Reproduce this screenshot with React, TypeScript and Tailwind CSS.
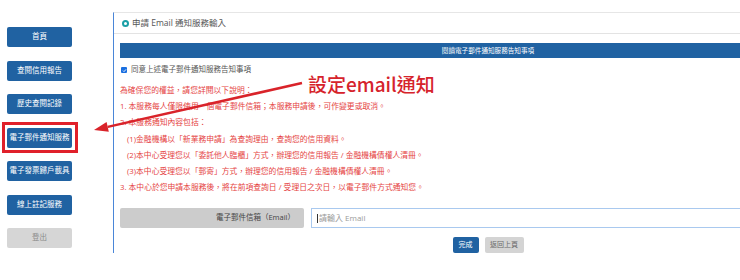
import React from "react";

const MENU = [
  "首頁",
  "查閱信用報告",
  "歷史查閱記錄",
  "電子郵件通知服務",
  "電子發票歸戶載具",
  "線上註記服務",
];

const NOTES: { text: string; indent?: boolean }[] = [
  { text: "為確保您的權益，請您詳閱以下說明：" },
  { text: "1. 本服務每人僅限使用一個電子郵件信箱；本服務申請後，可作變更或取消。" },
  { text: "2. 本服務通知內容包括：" },
  { text: "(1)金融機構以「新業務申請」為查詢理由，查詢您的信用資料。", indent: true },
  { text: "(2)本中心受理您以「委託他人臨櫃」方式，辦理您的信用報告 / 金融機構債權人清冊。", indent: true },
  { text: "(3)本中心受理您以「郵寄」方式，辦理您的信用報告 / 金融機構債權人清冊。", indent: true },
  { text: "3. 本中心於您申請本服務後，將在前項查詢日 / 受理日之次日，以電子郵件方式通知您。" },
];

function Sidebar() {
  return (
    <aside className="flex w-[113px] shrink-0 flex-col gap-[13.5px] pl-[7px] pt-[27px]">
      {MENU.map((label) => (
        <div
          key={label}
          className="flex h-[20px] w-[65px] items-center justify-center rounded-[2px] bg-[#2062a2] text-[7.5px] text-white"
        >
          {label}
        </div>
      ))}
      <div className="flex h-[20px] w-[65px] items-center justify-center rounded-[2px] bg-[#d6d6d6] text-[7.5px] text-[#8a8a8a]">
        登出
      </div>
    </aside>
  );
}

function MainPanel() {
  return (
    <main className="mt-[12px] w-[743px] shrink-0 border-l border-t border-l-[#4a86d8] border-t-[#e6e6e6]">
      <div className="flex h-[21px] items-center gap-[3px] border-b border-[#e3e3e3] pl-[8px] text-[8.5px] text-[#555]">
        <span className="size-[7px] rounded-full border-[2px] border-[#1a9fa6]" />
        <span>申請 Email 通知服務輸入</span>
      </div>

      <div className="pl-[6px]">
        <div className="mt-[9px] flex h-[15px] w-[736px] items-center justify-center bg-[#2062a2] text-[6.6px] text-white">
          閱讀電子郵件通知服務告知事項
        </div>

        <div className="mt-[6px] flex h-[12px] items-center gap-[4px] pl-[1px] text-[7.5px] text-[#555]">
          <span className="flex size-[6px] items-center justify-center rounded-[1px] bg-[#1a6fe0]">
            <svg viewBox="0 0 10 10" className="size-[5px]">
              <path d="M2 5.2l2 2 4-4.4" fill="none" stroke="white" strokeWidth="1.8" />
            </svg>
          </span>
          <span>同意上述電子郵件通知服務告知事項</span>
        </div>

        <div className="mt-[6px] text-[7.8px] leading-[16.2px] text-[#e5433f]">
          {NOTES.map((n) => (
            <p key={n.text} className={n.indent ? "pl-[7px]" : ""}>
              {n.text}
            </p>
          ))}
        </div>

        <div className="mt-[12.6px] flex h-[20px] w-[736px] gap-[7px]">
          <div className="flex w-[184px] items-center justify-end rounded-[2px] bg-[#cccccc] pr-[9px] text-[7.5px] text-[#444]">
            電子郵件信箱（Email）
          </div>
          <div className="flex flex-1 items-center border-[1.5px] border-[#a9c9ef] pl-[5px] text-[8px] text-[#9a9a9a]">
            <span className="mr-[1px] h-[9px] w-px bg-[#333]" />
            請輸入 Email
          </div>
        </div>

        <div className="mt-[9px] flex w-[736px] justify-center gap-[6px]">
          <div className="flex h-[16px] w-[26px] items-center justify-center rounded-[2px] bg-[#2062a2] text-[7px] text-white">
            完成
          </div>
          <div className="flex h-[16px] w-[39px] items-center justify-center rounded-[2px] bg-[#d4d4d4] text-[7px] text-[#6a6a6a]">
            返回上頁
          </div>
        </div>
      </div>
    </main>
  );
}

export default function App() {
  return (
    <div className="relative h-[280px] w-[740px] overflow-hidden bg-white font-['Open_Sans','Noto_Sans_CJK_TC',sans-serif]">
      <div className="flex">
        <Sidebar />
        <MainPanel />
      </div>

      {/* 標註：紅框 + 箭頭 + 文字 */}
      <div className="absolute left-[2px] top-[122px] h-[31px] w-[76px] border-[3px] border-[#e0202a]" />
      <svg className="absolute left-0 top-0" width="740" height="280">
        <line x1="302" y1="83" x2="107.7" y2="126.9" stroke="#d9232a" strokeWidth="2.5" />
        <polygon points="94,130 108.8,131.8 106.6,122" fill="#d9232a" />
      </svg>
      <div className="absolute left-[308px] top-[73px] font-['Noto_Sans_CJK_TC',sans-serif] text-[19px] font-medium leading-[22px] text-[#d6232b]">
        設定email通知
      </div>
    </div>
  );
}
